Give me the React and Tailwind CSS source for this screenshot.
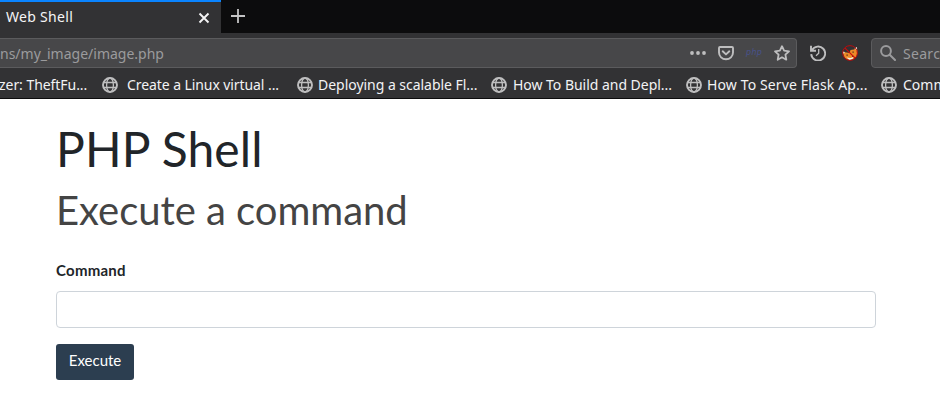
import React from "react";

function Globe({ className = "" }) {
  return (
    <svg className={`size-4 shrink-0 ${className}`} viewBox="0 0 16 16" fill="none" stroke="#bebebf">
      <circle cx="8" cy="8" r="7" strokeWidth="1.9" />
      <ellipse cx="8" cy="8" rx="3.4" ry="7" strokeWidth="1.3" />
      <path d="M1.5 5.5h13M1.5 10.5h13" strokeWidth="1.3" />
    </svg>
  );
}

function Bookmark({ label, width, gap, tracking }) {
  return (
    <div className={`flex shrink-0 items-center ${width}`}>
      <Globe />
      <span className={`${gap} ${tracking}`}>{label}</span>
    </div>
  );
}

function TabBar() {
  return (
    <div className="flex h-[33px] bg-[#0c0c0d]">
      <div className="flex w-[221px] items-center justify-between border-t-2 border-[#0a84ff] bg-[#323234] pl-[6px] pr-[11px]">
        <span className="pb-0.5 tracking-[0.3px] text-[#f5f5f6]">Web Shell</span>
        <svg className="size-3" viewBox="0 0 12 12" stroke="#f4f4f5" strokeWidth="1.9">
          <path d="M1.5 1.5l9 9M10.5 1.5l-9 9" />
        </svg>
      </div>
      <svg className="ml-[10px] mt-[9px] size-[14px]" viewBox="0 0 14 14" stroke="#c4c4c5" strokeWidth="1.8">
        <path d="M7 0v14M0 7h14" />
      </svg>
    </div>
  );
}

function Toolbar() {
  return (
    <div className="flex h-[39px] items-center pb-0.5 pt-px">
      <div className="mt-px flex h-[30px] w-[797px] shrink-0 items-center rounded-r border border-l-0 border-[#5b5b5d] bg-[#474749] pr-[6px]">
        <span className="flex-1 pt-0.5 text-[#9b9b9d]">ns/my_image/image.php</span>
        <svg className="w-4" viewBox="0 0 16 4" fill="#bebebf">
          <circle cx="2" cy="2" r="1.9" />
          <circle cx="8" cy="2" r="1.9" />
          <circle cx="14" cy="2" r="1.9" />
        </svg>
        <svg className="ml-3 size-4" viewBox="0 0 16 16" fill="none" stroke="#bebebf" strokeWidth="1.9" strokeLinecap="round" strokeLinejoin="round">
          <path d="M2 2h12a1 1 0 0 1 1 1v4.5a7 6.8 0 0 1-14 0V3a1 1 0 0 1 1-1z" />
          <path d="M4.7 6.3L8 9.4l3.3-3.1" />
        </svg>
        <span className="ml-3 w-4 text-[8px] italic leading-none tracking-[0.3px] text-[#48528c] font-['DejaVu_Sans']">php</span>
        <svg className="ml-3 size-4" viewBox="0 0 16 16" fill="none" stroke="#bebebf" strokeWidth="1.8" strokeLinejoin="round">
          <path d="M8 1.2l2.1 4.5 4.9.6-3.6 3.4.9 5L8 12.3l-4.3 2.4.9-5L1 6.3l4.9-.6z" />
        </svg>
      </div>
      <svg className="ml-[13px] mt-0.5 size-4 shrink-0" viewBox="0 0 16 16" fill="none" stroke="#bebebf" strokeWidth="1.9">
        <path d="M2 5.2A7 7 0 1 1 1.2 9.2" />
        <path d="M1 .8v5h5" />
        <path d="M8.7 4v4.3L6 10.8" strokeWidth="1.3" />
      </svg>
      <svg className="ml-4 mt-0.5 size-4 shrink-0" viewBox="0 0 16 16" fill="none">
        <path d="M1 7l3.500 .5 3 .5 1-3 3.500-.5 3-2 .5 6-1.500 3.500-3.500 2.500-4 .5-3.500-2L1.500 10z" fill="#ed8a27" />
        <path d="M12.500 3.500l2.500-1.500v3.500z" fill="#f4eee5" />
        <path d="M.8 6.500l2 .5-1 2z" fill="#f4eee5" />
        <path d="M4.500 12.500l4 .5 3-1-1 2-3 1z" fill="#f4eee5" />
        <path d="M4.500 9.500h1.200v1.200H4.500zM10.500 6.500h1.200v1.200h-1.200zM10 10.500h1.200v1.200H10z" fill="#41251b" />
        <circle cx="8" cy="8" r="7.4" stroke="#b80c0e" strokeWidth="1" />
        <path d="M2.800 2.800l10.400 10.400" stroke="#c80c0c" strokeWidth="1.200" />
      </svg>
      <div className="ml-[13px] mt-px flex h-[30px] w-[90px] shrink-0 items-center rounded-l border border-[#5b5b5d] bg-[#474749] pl-2">
        <svg className="size-4 shrink-0" viewBox="0 0 16 16" fill="none" stroke="#9b9b9d" strokeWidth="2">
          <circle cx="6" cy="6" r="4.9" />
          <path d="M9.7 9.7l5.3 5.3" strokeLinecap="round" />
        </svg>
        <span className="ml-[7px] pt-0.5 tracking-[0.3px] text-[#9b9b9d]">Searc</span>
      </div>
    </div>
  );
}

export default function App() {
  return (
    <div className="h-[400px] w-[940px] overflow-hidden bg-white">
      <header className="h-[99px] overflow-hidden whitespace-nowrap border-b border-[#0c0c0d] bg-[#323234] text-[14px] leading-5 font-['Noto_Sans',sans-serif]">
        <TabBar />
        <Toolbar />
        <div className="flex h-[26px] items-center text-[#f3f3f4]">
          <span className="-ml-px w-[103px] shrink-0 tracking-[-0.05px]">zer: TheftFu...</span>
          <Bookmark label="Create a Linux virtual ..." width="w-[195px]" gap="ml-[9px]" tracking="tracking-[-0.08px]" />
          <Bookmark label="Deploying a scalable Fl..." width="w-[194px]" gap="ml-[5px]" tracking="tracking-[-0.03px]" />
          <Bookmark label="How To Build and Depl..." width="w-[195px]" gap="ml-[6px]" tracking="tracking-[-0.03px]" />
          <Bookmark label="How To Serve Flask Ap..." width="w-[195px]" gap="ml-[5px]" tracking="tracking-[0.13px]" />
          <Bookmark label="Comm" width="w-[120px]" gap="ml-[6px]" tracking="tracking-normal" />
        </div>
      </header>
      <main className="px-14 pt-[21px] font-['Lato',sans-serif] text-[#212529]">
        <h1 className="text-[48px] leading-[58px] tracking-[0.1px]">PHP Shell</h1>
        <h2 className="mt-2 text-[40px] leading-[48px] tracking-[-0.03px] text-[#444]">Execute a command</h2>
        <label className="mt-[25px] block text-[15px] font-bold leading-[22px] tracking-[0.25px]" htmlFor="cmd">Command</label>
        <input id="cmd" className="mt-[10px] block h-[37px] w-[820px] rounded border border-[#ced4da] bg-white" />
        <button className="mt-4 block h-9 w-[78px] rounded-[3px] bg-[#2c3e50] pb-[3px] text-[15px] text-white">Execute</button>
      </main>
    </div>
  );
}
